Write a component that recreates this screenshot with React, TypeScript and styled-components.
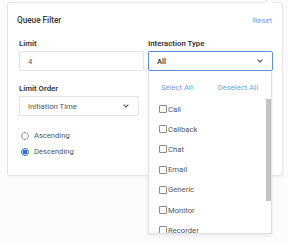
import React from "react";
import styled, { createGlobalStyle } from "styled-components";

const GlobalStyle = createGlobalStyle`
    html, body {
        margin: 0;
        padding: 0;
        background: #fcfcfd;
        font-family: Roboto, "Liberation Sans", sans-serif;
    }
`;

const Page = styled.div`
    width: 288px;
    height: 243px;
    padding: 2px 0 0 7px;
    box-sizing: border-box;
    overflow: hidden;
`;

const Panel = styled.div`
    position: relative;
    width: 276px;
    height: 174px;
    box-sizing: border-box;
    background: #fff;
    border: 1px solid #e3e6ea;
    border-radius: 3px;
    box-shadow: 0 1px 3px rgba(0, 0, 0, 0.06);
    padding: 11px 9px 0 9px;
`;

const Arrow = styled.div`
    position: absolute;
    top: -4px;
    right: 9px;
    width: 6px;
    height: 6px;
    background: #fff;
    border-left: 1px solid #e3e6ea;
    border-top: 1px solid #e3e6ea;
    transform: rotate(45deg);
`;

const Header = styled.div`
    display: flex;
    justify-content: space-between;
    align-items: center;
    height: 12px;
    padding-right: 1px;
`;

const Title = styled.div`
    font-size: 8.2px;
    font-weight: 500;
    color: #333;
`;

const LinkButton = styled.span`
    font-size: 7.7px;
    color: #6ea2ea;
`;

const Grid = styled.div`
    display: grid;
    grid-template-columns: 125px 125px;
    column-gap: 4px;
    row-gap: 12px;
    margin-top: 12px;
    padding-left: 2px;
`;

const Field = styled.div`
    position: relative;
    display: flex;
    flex-direction: column;
    gap: 1px;
`;

const Label = styled.div`
    font-size: 7.8px;
    font-weight: 600;
    color: #333;
    height: 12px;
    line-height: 12px;
`;

const Box = styled.div<{ $focused?: boolean; $width?: number }>`
    display: flex;
    align-items: center;
    justify-content: space-between;
    height: 20px;
    width: ${(p) => (p.$width ? `${p.$width}px` : "auto")};
    box-sizing: border-box;
    padding: 0 9px 0 8px;
    border: 1px solid ${(p) => (p.$focused ? "#5b8fd6" : "#e1e5ea")};
    border-radius: 2px;
    background: #fff;
    font-size: 7.7px;
    color: ${(p) => (p.$focused ? "#333" : "#555")};
    font-weight: ${(p) => (p.$focused ? 500 : 400)};
`;

const RadioGroup = styled.div`
    display: flex;
    flex-direction: column;
    gap: 3px;
    margin-top: 13px;
    padding-left: 4px;
`;

const RadioRow = styled.label`
    display: flex;
    align-items: center;
    gap: 5px;
    font-size: 7.6px;
    color: #555;
    height: 13px;
`;

const RadioDot = styled.span<{ $checked?: boolean }>`
    width: 8px;
    height: 8px;
    box-sizing: border-box;
    border-radius: 50%;
    border: 1px solid ${(p) => (p.$checked ? "#2f6fd6" : "#999")};
    background: ${(p) =>
        p.$checked ? "radial-gradient(circle, #2f6fd6 0 2.2px, #fff 2.6px)" : "#fff"};
`;

const Dropdown = styled.div`
    position: absolute;
    top: 33px;
    left: 0;
    width: 124px;
    height: 163px;
    box-sizing: border-box;
    background: #fff;
    border: 1px solid #dde1e6;
    border-top: none;
    box-shadow: 0 2px 4px rgba(0, 0, 0, 0.08);
    display: flex;
    flex-direction: column;
    overflow: hidden;
    z-index: 2;
`;

const DropdownActions = styled.div`
    display: flex;
    justify-content: space-between;
    padding: 12px 13px 0 12px;
    height: 25px;
    flex-shrink: 0;
    box-sizing: border-box;
`;

const OptionList = styled.div`
    flex: 1;
    min-height: 0;
    overflow: hidden;
    padding: 3px 0 0 10px;
`;

const ScrollThumb = styled.div`
    position: absolute;
    top: 28px;
    right: 0;
    width: 5px;
    height: 102px;
    background: #c4c4c4;
`;

const Option = styled.label`
    display: flex;
    align-items: center;
    height: 20.2px;
    font-size: 7.7px;
    color: #555;
`;

const CheckBox = styled.span`
    width: 8px;
    height: 8px;
    box-sizing: border-box;
    border: 1px solid #8c8c8c;
    border-radius: 1px;
    margin-right: 1px;
    background: #fff;
`;

const Chevron = () => (
    <svg width="6" height="4" viewBox="0 0 6 4">
        <polyline points="0.6,0.6 3,3 5.4,0.6" fill="none" stroke="#555" strokeWidth="1.1" />
    </svg>
);

const interactionTypes = ["Call", "Callback", "Chat", "Email", "Generic", "Monitor", "Recorder"];

export default function App() {
    return (
        <Page>
            <GlobalStyle />
            <Panel>
                <Arrow />
                <Header>
                    <Title>Queue Filter</Title>
                    <LinkButton>Reset</LinkButton>
                </Header>
                <Grid>
                    <Field>
                        <Label>Limit</Label>
                        <Box>4</Box>
                    </Field>
                    <Field>
                        <Label>Interaction Type</Label>
                        <Box $focused>
                            All
                            <Chevron />
                        </Box>
                        <Dropdown>
                            <DropdownActions>
                                <LinkButton>Select All</LinkButton>
                                <LinkButton>Deselect All</LinkButton>
                            </DropdownActions>
                            <OptionList>
                                {interactionTypes.map((t) => (
                                    <Option key={t}>
                                        <CheckBox />
                                        {t}
                                    </Option>
                                ))}
                            </OptionList>
                            <ScrollThumb />
                        </Dropdown>
                    </Field>
                    <Field>
                        <Label>Limit Order</Label>
                        <Box $width={120}>
                            Initiation Time
                            <Chevron />
                        </Box>
                    </Field>
                </Grid>
                <RadioGroup>
                    <RadioRow>
                        <RadioDot />
                        Ascending
                    </RadioRow>
                    <RadioRow>
                        <RadioDot $checked />
                        Descending
                    </RadioRow>
                </RadioGroup>
            </Panel>
        </Page>
    );
}
